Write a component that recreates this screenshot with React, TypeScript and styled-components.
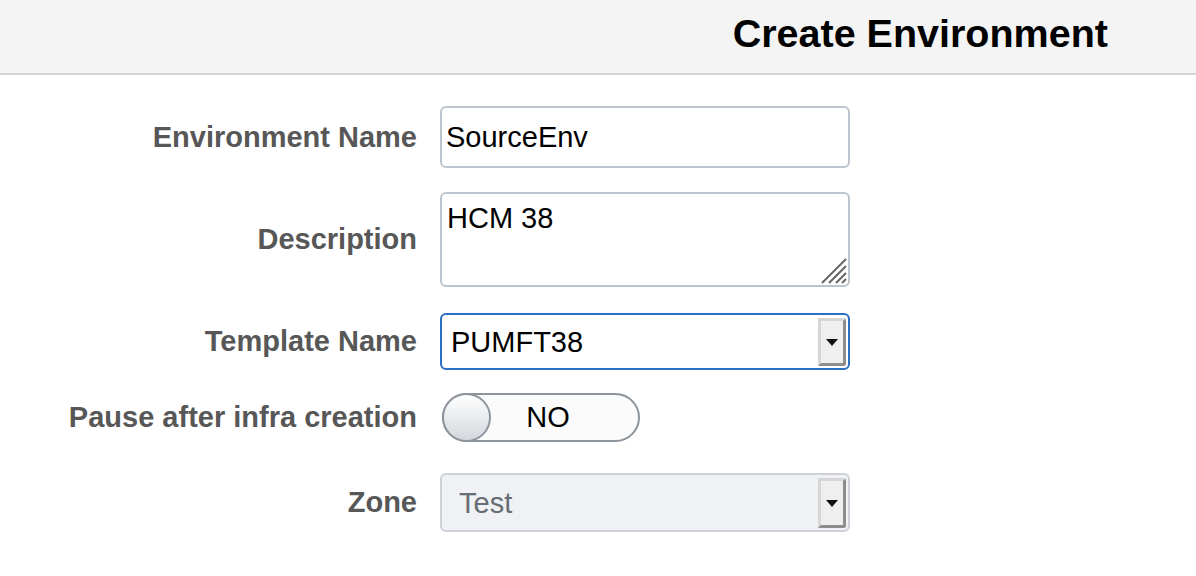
import React from 'react';
import styled, { createGlobalStyle } from 'styled-components';

const GlobalStyle = createGlobalStyle`
    html, body {
        margin: 0;
        padding: 0;
        background: #ffffff;
        font-family: "Liberation Sans", Arial, sans-serif;
    }
`;

const Header = styled.header`
    display: flex;
    justify-content: flex-end;
    align-items: center;
    height: 75px;
    padding: 0 88px 6px 0;
    box-sizing: border-box;
    background: #f4f4f4;
    border-bottom: 2px solid #d2d5da;
`;

const Title = styled.h1`
    margin: 0;
    font-size: 39.5px;
    font-weight: bold;
    color: #000000;
`;

const Form = styled.div`
    display: flex;
    flex-direction: column;
    padding-top: 31px;
`;

const Row = styled.div<{ $top?: number }>`
    display: flex;
    align-items: center;
    gap: 23px;
    margin-top: ${({ $top }) => $top ?? 0}px;
`;

const Label = styled.label`
    width: 417px;
    text-align: right;
    font-size: 29px;
    font-weight: bold;
    color: #575757;
`;

const TextInput = styled.input`
    width: 410px;
    height: 62px;
    box-sizing: border-box;
    padding: 0 4px;
    border: 2px solid #bcc4cd;
    border-radius: 6px;
    font-family: inherit;
    font-size: 29px;
    color: #000000;
    outline: none;
`;

const AreaWrap = styled.div`
    position: relative;
    width: 410px;
    height: 95px;
`;

const TextArea = styled.textarea`
    width: 100%;
    height: 100%;
    box-sizing: border-box;
    padding: 8px 5px;
    border: 2px solid #bcc4cd;
    border-radius: 6px;
    font-family: inherit;
    font-size: 29px;
    color: #000000;
    resize: none;
    outline: none;
`;

const Grip = styled.svg`
    position: absolute;
    right: 3px;
    bottom: 3px;
`;

const Select = styled.div<{ $disabled?: boolean }>`
    display: flex;
    align-items: center;
    width: 410px;
    height: ${({ $disabled }) => ($disabled ? 59 : 57)}px;
    box-sizing: border-box;
    padding: 3px 2px 2px ${({ $disabled }) => ($disabled ? 17 : 9)}px;
    border: 2px solid ${({ $disabled }) => ($disabled ? '#ced2d8' : '#2a6fc4')};
    border-radius: 6px;
    background: ${({ $disabled }) => ($disabled ? '#eff1f4' : '#ffffff')};
    font-size: 29px;
    color: ${({ $disabled }) => ($disabled ? '#676d75' : '#000000')};
`;

const SelectValue = styled.span`
    flex: 1;
`;

const ArrowButton = styled.span`
    display: flex;
    align-items: center;
    justify-content: center;
    align-self: stretch;
    width: 22px;
    background: #efefef;
    border-left: 3px solid #d6d6d6;
    border-top: 3px solid #d6d6d6;
    border-right: 3px solid #8d8d8d;
    border-bottom: 3px solid #8d8d8d;
    border-radius: 0 3px 3px 0;
`;

const Toggle = styled.div`
    position: relative;
    display: flex;
    align-items: center;
    justify-content: center;
    width: 198px;
    height: 49px;
    box-sizing: border-box;
    margin-left: 2px;
    padding-left: 14px;
    border: 2px solid #8e959c;
    border-radius: 25px;
    background: #fbfbfb;
    font-size: 29px;
    color: #000000;
`;

const Knob = styled.span`
    position: absolute;
    left: -2px;
    top: -2px;
    width: 49px;
    height: 49px;
    box-sizing: border-box;
    border: 2px solid #8e959c;
    border-radius: 50%;
    background: linear-gradient(to bottom, #ffffff, #d3d7dc);
`;

const Arrow = () => (
    <svg width="12" height="7" viewBox="0 0 12 7">
        <polygon points="0,0 12,0 6,7" fill="#111111" />
    </svg>
);

const App: React.FC = () => (
    <>
        <GlobalStyle />
        <Header>
            <Title>Create Environment</Title>
        </Header>
        <Form>
            <Row>
                <Label>Environment Name</Label>
                <TextInput defaultValue="SourceEnv" />
            </Row>
            <Row $top={24}>
                <Label>Description</Label>
                <AreaWrap>
                    <TextArea defaultValue="HCM 38" />
                    <Grip width="26" height="26" viewBox="0 0 26 26">
                        <path d="M1 25 L25 1 M8 25 L25 8 M15 25 L25 15 M21 25 L25 21" stroke="#666666" strokeWidth="2" />
                    </Grip>
                </AreaWrap>
            </Row>
            <Row $top={26}>
                <Label>Template Name</Label>
                <Select>
                    <SelectValue>PUMFT38</SelectValue>
                    <ArrowButton><Arrow /></ArrowButton>
                </Select>
            </Row>
            <Row $top={23}>
                <Label>Pause after infra creation</Label>
                <Toggle>
                    <Knob />
                    NO
                </Toggle>
            </Row>
            <Row $top={31}>
                <Label>Zone</Label>
                <Select $disabled>
                    <SelectValue>Test</SelectValue>
                    <ArrowButton><Arrow /></ArrowButton>
                </Select>
            </Row>
        </Form>
    </>
);

export default App;
